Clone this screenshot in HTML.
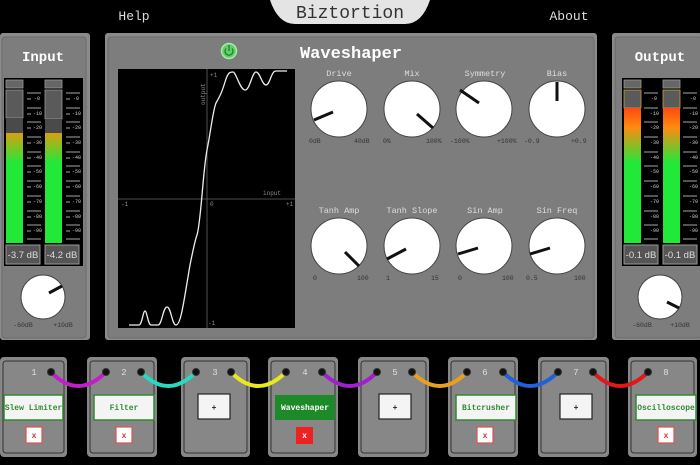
<!DOCTYPE html>
<html><head><meta charset="utf-8"><style>
html,body{margin:0;padding:0;background:#000;width:700px;height:465px;overflow:hidden}
svg{display:block;font-family:"Liberation Mono",monospace}
</style></head><body>
<svg width="700" height="465" viewBox="0 0 700 465" xmlns="http://www.w3.org/2000/svg">
<rect width="700" height="465" fill="#000"/>
<!-- top bar -->
<text x="134" y="20" fill="#ddd" font-size="13" text-anchor="middle">Help</text>
<text x="569" y="20" fill="#ddd" font-size="13" text-anchor="middle">About</text>
<path d="M270,0 H430 Q422,24 405,24 H295 Q278,24 270,0Z" fill="#e4e4e4"/>
<text x="350" y="18" fill="#333" font-size="18" text-anchor="middle">Biztortion</text>

<!-- Input panel -->
<rect x="0" y="33" width="90" height="307" rx="3" fill="#8a8a8a"/>
<rect x="2" y="37" width="84" height="301" rx="3" fill="#7d7d7d" stroke="#6a6a6a"/>
<text x="43" y="61" fill="#fff" font-size="14" font-weight="bold" text-anchor="middle">Input</text>
<rect x="4" y="78" width="79" height="188" fill="#000"/>
<g>
<rect x="6" y="80" width="17" height="8" fill="#666" stroke="#999" stroke-width="0.8"/>
<rect x="6" y="90" width="17" height="153" fill="#22e83a"/>
<rect x="6" y="90" width="17" height="28" fill="#5a5a5a" stroke="#999" stroke-width="0.8"/>
<rect x="6" y="118" width="17" height="15" fill="#4a4a4a"/>
<rect x="6" y="133" width="17" height="30" fill="url(#gi)"/>
<rect x="45" y="80" width="17" height="8" fill="#666" stroke="#999" stroke-width="0.8"/>
<rect x="45" y="90" width="17" height="153" fill="#22e83a"/>
<rect x="45" y="90" width="17" height="29" fill="#5a5a5a" stroke="#999" stroke-width="0.8"/>
<rect x="45" y="119" width="17" height="14" fill="#4a4a4a"/>
<rect x="45" y="133" width="17" height="30" fill="url(#gi)"/>
</g>
<defs>
<linearGradient id="gi" x1="0" y1="0" x2="0" y2="1"><stop offset="0" stop-color="#d8a010"/><stop offset="1" stop-color="#22e83a"/></linearGradient>
<linearGradient id="go" x1="0" y1="0" x2="0" y2="1"><stop offset="0" stop-color="#ff4a10"/><stop offset="0.35" stop-color="#ff8a10"/><stop offset="1" stop-color="#22e83a"/></linearGradient>
</defs>
<g stroke="#ddd" stroke-width="0.8">
<path d="M27,93H41M27,108H41M27,122H41M27,137H41M27,152H41M27,166H41M27,181H41M27,196H41M27,211H41M27,225H41M27,239H41"/>
<path d="M66,93H80M66,108H80M66,122H80M66,137H80M66,152H80M66,166H80M66,181H80M66,196H80M66,211H80M66,225H80M66,239H80"/>
<path d="M27,99H31M27,114H31M27,128H31M27,143H31M27,158H31M27,172H31M27,187H31M27,202H31M27,217H31M27,231H31"/>
<path d="M66,99H70M66,114H70M66,128H70M66,143H70M66,158H70M66,172H70M66,187H70M66,202H70M66,217H70M66,231H70"/>
</g>
<g fill="#ccc" font-size="5">
<text x="34" y="100">-0</text><text x="33" y="115">-10</text><text x="33" y="129">-20</text><text x="33" y="144">-30</text><text x="33" y="159">-40</text><text x="33" y="173">-50</text><text x="33" y="188">-60</text><text x="33" y="203">-70</text><text x="33" y="218">-80</text><text x="33" y="232">-90</text>
<text x="73" y="100">-0</text><text x="72" y="115">-10</text><text x="72" y="129">-20</text><text x="72" y="144">-30</text><text x="72" y="159">-40</text><text x="72" y="173">-50</text><text x="72" y="188">-60</text><text x="72" y="203">-70</text><text x="72" y="218">-80</text><text x="72" y="232">-90</text>
</g>
<rect x="6" y="245" width="34" height="19" fill="#555" stroke="#999"/>
<rect x="45" y="245" width="34" height="19" fill="#555" stroke="#999"/>
<text x="23" y="258" fill="#ddd" font-size="9.5" font-family="Liberation Sans" text-anchor="middle">-3.7 dB</text>
<text x="62" y="258" fill="#ddd" font-size="9.5" font-family="Liberation Sans" text-anchor="middle">-4.2 dB</text>
<circle cx="43" cy="297" r="22" fill="#fff" stroke="#444"/>
<line x1="49" y1="293" x2="62" y2="286" stroke="#111" stroke-width="3"/>
<text x="23" y="327" fill="#333" font-size="6.5" text-anchor="middle">-60dB</text>
<text x="63" y="327" fill="#333" font-size="6.5" text-anchor="middle">+10dB</text>

<!-- Output panel -->
<rect x="612" y="33" width="90" height="307" rx="3" fill="#8a8a8a"/>
<rect x="615" y="37" width="86" height="301" rx="3" fill="#7d7d7d" stroke="#6a6a6a"/>
<text x="660" y="61" fill="#fff" font-size="14" font-weight="bold" text-anchor="middle">Output</text>
<rect x="622" y="78" width="78" height="188" fill="#000"/>
<rect x="624" y="80" width="17" height="8" fill="#666" stroke="#999" stroke-width="0.8"/>
<rect x="624" y="90" width="17" height="153" fill="#22e83a"/>
<rect x="624" y="90" width="17" height="18" fill="#5a5a5a" stroke="#c9a040" stroke-width="0.8"/>
<rect x="624" y="108" width="17" height="55" fill="url(#go)"/>
<rect x="663" y="80" width="17" height="8" fill="#666" stroke="#999" stroke-width="0.8"/>
<rect x="663" y="90" width="17" height="153" fill="#22e83a"/>
<rect x="663" y="90" width="17" height="18" fill="#5a5a5a" stroke="#c9a040" stroke-width="0.8"/>
<rect x="663" y="108" width="17" height="55" fill="url(#go)"/>
<g stroke="#ddd" stroke-width="0.8">
<path d="M644,93H658M644,108H658M644,122H658M644,137H658M644,152H658M644,166H658M644,181H658M644,196H658M644,211H658M644,225H658M644,239H658"/>
<path d="M683,93H697M683,108H697M683,122H697M683,137H697M683,152H697M683,166H697M683,181H697M683,196H697M683,211H697M683,225H697M683,239H697"/>
</g>
<g fill="#ccc" font-size="5">
<text x="651" y="100">-0</text><text x="650" y="115">-10</text><text x="650" y="129">-20</text><text x="650" y="144">-30</text><text x="650" y="159">-40</text><text x="650" y="173">-50</text><text x="650" y="188">-60</text><text x="650" y="203">-70</text><text x="650" y="218">-80</text><text x="650" y="232">-90</text>
<text x="690" y="100">-0</text><text x="689" y="115">-10</text><text x="689" y="129">-20</text><text x="689" y="144">-30</text><text x="689" y="159">-40</text><text x="689" y="173">-50</text><text x="689" y="188">-60</text><text x="689" y="203">-70</text><text x="689" y="218">-80</text><text x="689" y="232">-90</text>
</g>
<rect x="624" y="245" width="34" height="19" fill="#555" stroke="#999"/>
<rect x="663" y="245" width="34" height="19" fill="#555" stroke="#999"/>
<text x="641" y="258" fill="#ddd" font-size="9.5" font-family="Liberation Sans" text-anchor="middle">-0.1 dB</text>
<text x="680" y="258" fill="#ddd" font-size="9.5" font-family="Liberation Sans" text-anchor="middle">-0.1 dB</text>
<circle cx="660" cy="297" r="22" fill="#fff" stroke="#444"/>
<line x1="667" y1="302" x2="679" y2="308" stroke="#111" stroke-width="3"/>
<text x="642" y="327" fill="#333" font-size="6.5" text-anchor="middle">-60dB</text>
<text x="680" y="327" fill="#333" font-size="6.5" text-anchor="middle">+10dB</text>

<!-- Main panel -->
<rect x="105" y="33" width="492" height="307" rx="3" fill="#8a8a8a"/>
<rect x="108" y="37" width="486" height="301" rx="3" fill="#7d7d7d" stroke="#6a6a6a"/>
<circle cx="229" cy="51" r="7.5" fill="#5fd06a" stroke="#a8e8a8" stroke-width="1.5"/>
<path d="M226,48.5 A4,4 0 1 0 232,48.5" fill="none" stroke="#2a7a2a" stroke-width="1.3"/>
<line x1="229" y1="45" x2="229" y2="51" stroke="#2a7a2a" stroke-width="1.3"/>
<text x="351" y="58" fill="#fff" font-size="17" font-weight="bold" text-anchor="middle">Waveshaper</text>

<rect x="118" y="69" width="177" height="259" fill="#000"/>
<line x1="207" y1="69" x2="207" y2="328" stroke="#666" stroke-width="0.8"/>
<line x1="118" y1="199" x2="295" y2="199" stroke="#666" stroke-width="0.8"/>
<g fill="#888" font-size="6">
<text x="210" y="77">+1</text>
<text x="263" y="195">input</text>
<text x="121" y="206">-1</text><text x="210" y="206">0</text><text x="286" y="206">+1</text>
<text x="208" y="325">-1</text>
<text transform="translate(205,105) rotate(-90)">output</text>
</g>
<path d="M129,325 L139,325 C142,325 143,311 145,311 C147,311 148,325 151,325 L158,325 C162,325 163,307 167,307 C171,307 172,325 176,325 C181,325 184,300 190,265 C193,250 195,240 197,235 C201,222 203,170 207,150 C211,130 213,110 216,103 C220,96 222,92 225,82 C228,72 230,72 233,72 C236,72 240,90 245,90 C250,90 252,72 256,72 C260,72 262,85 266,85 C270,85 271,71 276,71 L287,71" fill="none" stroke="#eee" stroke-width="1.3"/>

<g fill="#ddd" font-size="8.5" text-anchor="middle">
<text x="339" y="76">Drive</text><text x="412" y="76">Mix</text><text x="485" y="76">Symmetry</text><text x="557" y="76">Bias</text>
<text x="339" y="213">Tanh Amp</text><text x="412" y="213">Tanh Slope</text><text x="485" y="213">Sin Amp</text><text x="557" y="213">Sin Freq</text>
</g>
<g fill="#fff" stroke="#444" stroke-width="1">
<circle cx="339" cy="109" r="28"/><circle cx="412" cy="109" r="28"/><circle cx="484" cy="109" r="28"/><circle cx="557" cy="109" r="28"/>
<circle cx="339" cy="246" r="28"/><circle cx="412" cy="246" r="28"/><circle cx="484" cy="246" r="28"/><circle cx="557" cy="246" r="28"/>
</g>
<g stroke="#111" stroke-width="3">
<line x1="333" y1="112" x2="314" y2="120"/>
<line x1="417" y1="114" x2="433" y2="128"/>
<line x1="479" y1="103" x2="460" y2="90"/>
<line x1="557" y1="82" x2="557" y2="101"/>
<line x1="345" y1="252" x2="359" y2="266"/>
<line x1="406" y1="249" x2="387" y2="259"/>
<line x1="478" y1="248" x2="458" y2="254"/>
<line x1="550" y1="248" x2="530" y2="254"/>
</g>
<g fill="#333" font-size="6.5">
<text x="309" y="143">0dB</text><text x="354" y="143">40dB</text>
<text x="383" y="143">0%</text><text x="426" y="143">100%</text>
<text x="450" y="143">-100%</text><text x="497" y="143">+100%</text>
<text x="524" y="143">-0.9</text><text x="571" y="143">+0.9</text>
<text x="313" y="280">0</text><text x="357" y="280">100</text>
<text x="386" y="280">1</text><text x="431" y="280">15</text>
<text x="458" y="280">0</text><text x="502" y="280">100</text>
<text x="526" y="280">0.5</text><text x="574" y="280">100</text>
</g>

<!-- bottom modules -->
<g fill="#878787">
<rect x="0" y="357" width="67" height="100" rx="4"/><rect x="87" y="357" width="70" height="100" rx="4"/>
<rect x="181" y="357" width="69" height="100" rx="4"/><rect x="268" y="357" width="70" height="100" rx="4"/>
<rect x="358" y="357" width="71" height="100" rx="4"/><rect x="448" y="357" width="70" height="100" rx="4"/>
<rect x="538" y="357" width="71" height="100" rx="4"/><rect x="628" y="357" width="69" height="100" rx="4"/>
</g>
<g fill="none" stroke="#333" stroke-width="1">
<rect x="3" y="361" width="61" height="92" rx="3"/><rect x="90" y="361" width="64" height="92" rx="3"/>
<rect x="184" y="361" width="63" height="92" rx="3"/><rect x="271" y="361" width="64" height="92" rx="3"/>
<rect x="361" y="361" width="65" height="92" rx="3"/><rect x="451" y="361" width="64" height="92" rx="3"/>
<rect x="541" y="361" width="65" height="92" rx="3"/><rect x="631" y="361" width="63" height="92" rx="3"/>
</g>
<g fill="#ddd" font-size="9" text-anchor="middle">
<text x="34" y="375">1</text><text x="124" y="375">2</text><text x="215" y="375">3</text><text x="305" y="375">4</text>
<text x="395" y="375">5</text><text x="485" y="375">6</text><text x="576" y="375">7</text><text x="666" y="375">8</text>
</g>
<g fill="none" stroke-width="4" stroke-linecap="round">
<path d="M51,372 Q78,400 106,372" stroke="#c21fc8"/>
<path d="M141,372 Q168,400 196,372" stroke="#28d8c2"/>
<path d="M231,372 Q258,400 286,372" stroke="#e8e820"/>
<path d="M322,372 Q350,400 377,372" stroke="#a020d0"/>
<path d="M412,372 Q440,400 467,372" stroke="#e8a020"/>
<path d="M503,372 Q530,400 558,372" stroke="#2060d8"/>
<path d="M593,372 Q620,400 648,372" stroke="#e01818"/>
</g>
<g fill="#111" stroke="#333" stroke-width="1">
<circle cx="51" cy="372" r="3.5"/><circle cx="106" cy="372" r="3.5"/><circle cx="141" cy="372" r="3.5"/><circle cx="196" cy="372" r="3.5"/>
<circle cx="231" cy="372" r="3.5"/><circle cx="286" cy="372" r="3.5"/><circle cx="322" cy="372" r="3.5"/><circle cx="377" cy="372" r="3.5"/>
<circle cx="412" cy="372" r="3.5"/><circle cx="467" cy="372" r="3.5"/><circle cx="503" cy="372" r="3.5"/><circle cx="558" cy="372" r="3.5"/>
<circle cx="593" cy="372" r="3.5"/><circle cx="648" cy="372" r="3.5"/>
</g>
<g fill="#f4f4f4" stroke="#2f8a2f" stroke-width="1.5">
<rect x="4" y="395" width="59" height="25"/><rect x="94" y="395" width="60" height="25"/>
<rect x="456" y="395" width="60" height="25"/><rect x="636" y="395" width="60" height="25"/>
</g>
<rect x="275" y="395" width="60" height="25" fill="#1d8a2a"/>
<g fill="#f4f4f4" stroke="#222" stroke-width="1.2">
<rect x="198" y="394" width="32" height="25"/><rect x="379" y="394" width="32" height="25"/><rect x="560" y="394" width="32" height="25"/>
</g>
<g font-size="8" font-weight="bold" text-anchor="middle">
<text x="33.5" y="410" fill="#2f8a2f">Slew Limiter</text>
<text x="124" y="410" fill="#2f8a2f">Filter</text>
<text x="305" y="410" fill="#fff">Waveshaper</text>
<text x="486" y="410" fill="#2f8a2f">Bitcrusher</text>
<text x="666" y="410" fill="#2f8a2f">Oscilloscope</text>
<text x="214" y="410" fill="#222">+</text><text x="395" y="410" fill="#222">+</text><text x="576" y="410" fill="#222">+</text>
</g>
<g fill="#fff" stroke="#e05050" stroke-width="1.2">
<rect x="26" y="427" width="16" height="16"/><rect x="116" y="427" width="16" height="16"/>
<rect x="477" y="427" width="16" height="16"/><rect x="658" y="427" width="16" height="16"/>
</g>
<rect x="296" y="427" width="17" height="17" fill="#ee2020"/>
<g font-size="8" font-weight="bold" text-anchor="middle">
<text x="34" y="438" fill="#e03030">x</text><text x="124" y="438" fill="#e03030">x</text>
<text x="304.5" y="438" fill="#fff">x</text>
<text x="485" y="438" fill="#e03030">x</text><text x="666" y="438" fill="#e03030">x</text>
</g>
</svg>
</body></html>
